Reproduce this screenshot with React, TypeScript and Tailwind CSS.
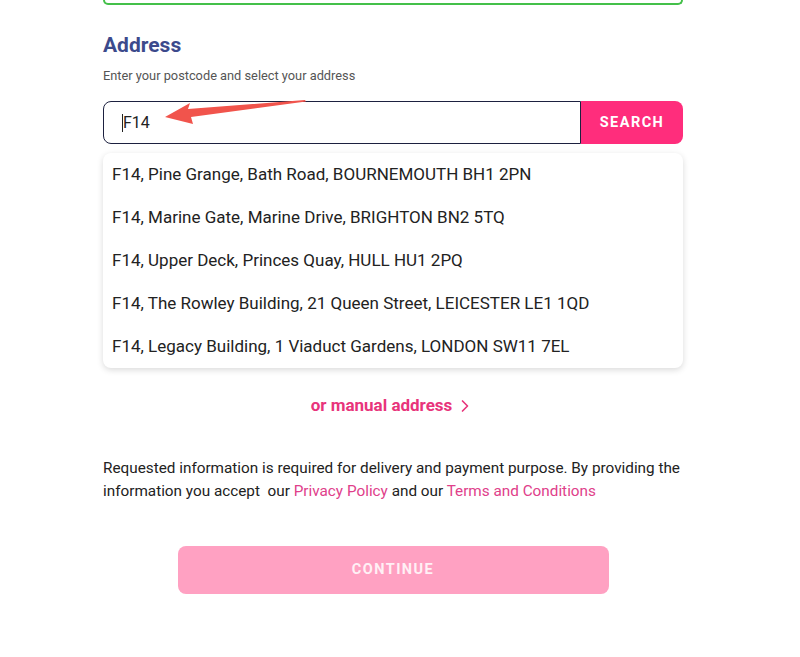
import { ChevronRight } from "lucide-react";

const addresses = [
  "F14, Pine Grange, Bath Road, BOURNEMOUTH BH1 2PN",
  "F14, Marine Gate, Marine Drive, BRIGHTON BN2 5TQ",
  "F14, Upper Deck, Princes Quay, HULL HU1 2PQ",
  "F14, The Rowley Building, 21 Queen Street, LEICESTER LE1 1QD",
  "F14, Legacy Building, 1 Viaduct Gardens, LONDON SW11 7EL",
];

function Arrow() {
  return (
    <svg
      className="absolute left-[57px] top-[-6px] pointer-events-none"
      width="150"
      height="35"
      viewBox="0 0 150 35"
    >
      <polygon
        points="5,22 30,8 28,14 145,5 146,6.5 31,22 33,29"
        fill="#f1544c"
      />
    </svg>
  );
}

export default function App() {
  return (
    <div className="min-h-screen w-[800px] bg-white font-['Roboto',sans-serif]">
      <div className="ml-[103px] w-[580px]">

        {/* bottom of the previous card */}
        <div className="h-[5px] rounded-b-[8px] border-x-2 border-b-2 border-[#44c04a]" />

        <h2 className="mt-[26px] text-[21px] font-bold leading-[28px] text-[#3c4a8c]">
          Address
        </h2>
        <p className="mt-[9px] text-[12.8px] leading-[16px] text-[#555]">
          Enter your postcode and select your address
        </p>

        <div className="relative mt-[17px] flex h-[43px]">
          <div className="flex flex-1 items-center rounded-l-[8px] border border-[#1d2140] pl-[18px] text-[16px] text-[#222]">
            <span className="border-l border-[#222] leading-[18px]">F14</span>
          </div>
          <button className="w-[102px] rounded-r-[8px] bg-[#ff2d7c] text-[14.5px] font-bold tracking-[0.1em] text-white">
            SEARCH
          </button>
          <Arrow />
        </div>

        <div className="mt-[9px] rounded-[8px] bg-white shadow-[0_2px_6px_rgba(0,0,0,0.15)]">
          {addresses.map((a) => (
            <div
              key={a}
              className="flex h-[43px] items-center px-[9px] text-[17px] text-[#222]"
            >
              {a}
            </div>
          ))}
        </div>

        <div className="mt-[25px] flex items-center justify-center gap-[3px] text-[17px] font-bold leading-[25px] text-[#e8347b]">
          or manual address
          <ChevronRight size={20} strokeWidth={2} />
        </div>

        <p className="mt-[39px] text-[15.3px] leading-[23px] text-[#222]">
          Requested information is required for delivery and payment purpose. By providing the
          information you accept&nbsp; our <span className="text-[#e0408a]">Privacy Policy</span> and
          our <span className="text-[#e0408a]">Terms and Conditions</span>
        </p>

        <div className="mt-[43px] flex justify-center">
          <button className="h-[48px] w-[431px] rounded-[8px] bg-[#ffa1c2] text-[14.5px] font-bold tracking-[0.1em] text-[#fff0f5]">
            CONTINUE
          </button>
        </div>

      </div>
    </div>
  );
}
